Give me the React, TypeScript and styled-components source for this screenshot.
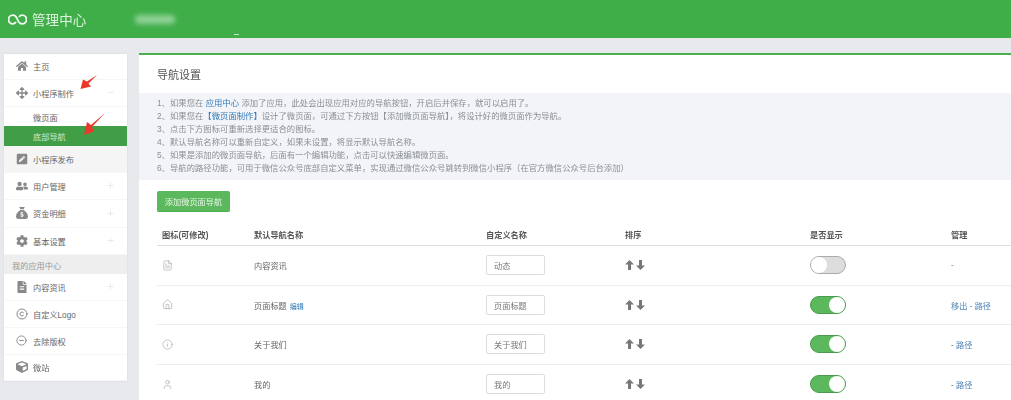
import React from 'react';
import styled, { createGlobalStyle } from 'styled-components';
import { FaHome, FaArrowsAlt, FaPenSquare, FaUserFriends, FaCog, FaFileAlt, FaCube } from 'react-icons/fa';
import { FaSackDollar } from 'react-icons/fa6';
import { Copyright, CircleMinus, FileText, House, Info, User, Plus, Minus } from 'lucide-react';

const GlobalStyle = createGlobalStyle`
    html, body {
        margin: 0;
        height: 400px;
        overflow: hidden;
        background: #e7e9ec;
        font-family: "Liberation Sans", "Noto Sans CJK SC", sans-serif;
        color: #666;
    }
`;

const Page = styled.div`
    position: relative;
    height: 400px;
    overflow: hidden;
    filter: blur(0.3px);
`;

const Header = styled.header`
    position: relative;
    height: 38px;
    background: #3fae49;
    display: flex;
    align-items: center;
    padding-left: 8px;
    color: #dcf1de;
`;

const BrandName = styled.span`
    font-size: 13.5px;
    margin-left: 5px;
    letter-spacing: 0.1px;
`;

const BlurredName = styled.div`
    width: 40px;
    height: 9px;
    margin-left: 49px;
    background: #8fd196;
    border-radius: 4px;
    filter: blur(2.5px);
`;

const HeaderSpeck = styled.div`
    position: absolute;
    left: 234px;
    top: 34px;
    width: 5px;
    height: 1px;
    background: #bfe6c3;
`;

const Body = styled.div`
    display: flex;
    align-items: flex-start;
    gap: 12px;
    padding: 15px 0 0 4px;
`;

const Sidebar = styled.nav`
    width: 123px;
    margin-top: 1px;
    background: #fff;
    box-shadow: 0 0 2px rgba(0, 0, 0, 0.08);
    flex-shrink: 0;
`;

const MenuRow = styled.div<{ $h?: number; $shade?: boolean }>`
    height: ${(p) => p.$h ?? 27}px;
    display: flex;
    align-items: center;
    padding: 0 12px 1px;
    font-size: 8.2px;
    color: #666;
    background: ${(p) => (p.$shade ? '#f5f5f5' : '#fff')};
    border-bottom: 1px solid #f6f6f6;
    box-sizing: border-box;
`;

const MenuIcon = styled.span`
    width: 17px;
    display: flex;
    justify-content: flex-start;
    color: #888;
    font-size: 12px;
`;

const MenuLabel = styled.span`
    flex: 1;
`;

const MenuMark = styled.span`
    color: #ccc;
    display: flex;
`;

const SubRow = styled.div<{ $active?: boolean }>`
    height: ${(p) => (p.$active ? 20 : 19)}px;
    display: flex;
    align-items: center;
    padding-left: 29px;
    font-size: 8.2px;
    color: ${(p) => (p.$active ? '#cfe8d0' : '#666')};
    background: ${(p) => (p.$active ? '#429e46' : '#fff')};
`;

const SectionLabel = styled.div`
    height: 19px;
    display: flex;
    align-items: center;
    padding-left: 8px;
    font-size: 8.2px;
    color: #999;
    background: #eee;
`;

const Main = styled.main`
    flex: 1;
    height: 345px;
    background: #fff;
    border-top: 2px solid #4caf50;
`;

const PanelTitle = styled.div`
    height: 38px;
    display: flex;
    align-items: center;
    padding: 0 0 1px 18px;
    box-sizing: border-box;
    font-size: 11px;
    color: #555;
`;

const Notes = styled.div`
    height: 87px;
    box-sizing: border-box;
    padding: 4px 0 0 18px;
    background: #f2f4f7;
    font-size: 8.35px;
    line-height: 13.1px;
    color: #8a8f96;
`;

const NoteLink = styled.span`
    color: #337ab7;
`;

const AddButton = styled.div`
    width: 73px;
    height: 21px;
    margin: 11px 0 0 18px;
    display: flex;
    align-items: center;
    justify-content: center;
    background: #5cb85c;
    border-radius: 2px;
    border-bottom: 1px solid #4cae4c;
    box-sizing: border-box;
    color: #e8f6e8;
    font-size: 8.2px;
`;

const Table = styled.div`
    margin: 11px 0 0 18px;
`;

const gridColumns = '92px 232px 139px 185px 141px 1fr';

const HeadRow = styled.div`
    display: grid;
    grid-template-columns: ${gridColumns};
    align-items: center;
    height: 22px;
    padding-left: 5px;
    border-bottom: 1px solid #ddd;
    font-size: 8.2px;
    font-weight: bold;
    color: #555;
`;

const BodyRow = styled.div`
    display: grid;
    grid-template-columns: ${gridColumns};
    align-items: center;
    height: 39.6px;
    box-sizing: border-box;
    padding-left: 5px;
    border-bottom: 1px solid #eee;
    font-size: 8.2px;
    color: #666;
`;

const RowIcon = styled.span`
    display: flex;
    color: #999;
`;

const EditLink = styled.span`
    color: #337ab7;
    font-size: 7px;
    margin-left: 3px;
`;

const NameInput = styled.div`
    width: 59px;
    height: 20px;
    box-sizing: border-box;
    display: flex;
    align-items: center;
    padding-left: 7px;
    border: 1px solid #ddd;
    border-radius: 2px;
    box-shadow: 0 0 1px rgba(0, 0, 0, 0.08);
    color: #777;
`;

const Arrows = styled.span`
    display: flex;
    gap: 2px;
    color: #777;
`;

const Toggle = styled.span<{ $on: boolean }>`
    display: flex;
    justify-content: ${(p) => (p.$on ? 'flex-end' : 'flex-start')};
    width: 36px;
    height: 18px;
    box-sizing: border-box;
    border-radius: 9px;
    border: 1px solid ${(p) => (p.$on ? '#4a9a4d' : '#aaa')};
    background: ${(p) => (p.$on ? '#5cb85c' : '#ddd')};
`;

const Knob = styled.span`
    width: 16px;
    height: 16px;
    border-radius: 50%;
    background: #fff;
`;

const ManageLinks = styled.span<{ $plain?: boolean }>`
    color: ${(p) => (p.$plain ? '#888' : '#4f86b8')};
`;

const RedArrow = styled.svg`
    position: absolute;
    left: 0;
    top: 0;
    pointer-events: none;
`;

const LinkLogo = () => (
    <svg width="19" height="11" viewBox="0 0 19 11" fill="none" stroke="#eef8ef" strokeWidth="1.9">
        <path d="M8 8 C7.2 9.2 6.2 9.9 4.9 9.9 A4.4 4.4 0 0 1 4.9 1.1 C7.4 1.1 8.5 3 9.5 5.5 C10.5 8 11.6 9.9 14.1 9.9 A4.4 4.4 0 0 0 14.1 1.1 C12.8 1.1 11.8 1.8 11 3" />
    </svg>
);

const SortArrow = ({ down }: { down?: boolean }) => (
    <svg width="9" height="10" viewBox="0 0 9 10" fill="currentColor">
        <polygon
            points="4.5,0 9,4.6 6,4.6 6,10 3,10 3,4.6 0,4.6"
            transform={down ? 'rotate(180 4.5 5)' : undefined}
        />
    </svg>
);

const plus = <MenuMark><Plus size={9} strokeWidth={1} /></MenuMark>;

const rows = [
    { icon: <FileText size={11} strokeWidth={1.2} />, name: '内容资讯', custom: '动态', on: false, manage: '-', plain: true },
    { icon: <House size={11} strokeWidth={1.2} />, name: '页面标题', edit: true, custom: '页面标题', on: true, manage: '移出 - 路径' },
    { icon: <Info size={11} strokeWidth={1.2} />, name: '关于我们', custom: '关于我们', on: true, manage: '- 路径' },
    { icon: <User size={11} strokeWidth={1.2} />, name: '我的', custom: '我的', on: true, manage: '- 路径' },
];

export default function App() {
    return (
        <Page>
            <GlobalStyle />
            <Header>
                <LinkLogo />
                <BrandName>管理中心</BrandName>
                <BlurredName />
                <HeaderSpeck />
            </Header>
            <Body>
                <Sidebar>
                    <MenuRow $h={26}><MenuIcon><FaHome /></MenuIcon><MenuLabel>主页</MenuLabel></MenuRow>
                    <MenuRow>
                        <MenuIcon><FaArrowsAlt /></MenuIcon>
                        <MenuLabel>小程序制作</MenuLabel>
                        <MenuMark><Minus size={9} strokeWidth={1} /></MenuMark>
                    </MenuRow>
                    <SubRow>微页面</SubRow>
                    <SubRow $active>底部导航</SubRow>
                    <MenuRow $shade><MenuIcon><FaPenSquare /></MenuIcon><MenuLabel>小程序发布</MenuLabel></MenuRow>
                    <MenuRow><MenuIcon><FaUserFriends /></MenuIcon><MenuLabel>用户管理</MenuLabel>{plus}</MenuRow>
                    <MenuRow $h={28}><MenuIcon><FaSackDollar /></MenuIcon><MenuLabel>资金明细</MenuLabel>{plus}</MenuRow>
                    <MenuRow><MenuIcon><FaCog /></MenuIcon><MenuLabel>基本设置</MenuLabel>{plus}</MenuRow>
                    <SectionLabel>我的应用中心</SectionLabel>
                    <MenuRow><MenuIcon><FaFileAlt /></MenuIcon><MenuLabel>内容资讯</MenuLabel>{plus}</MenuRow>
                    <MenuRow><MenuIcon><Copyright size={12} /></MenuIcon><MenuLabel>自定义Logo</MenuLabel></MenuRow>
                    <MenuRow><MenuIcon><CircleMinus size={11} /></MenuIcon><MenuLabel>去除版权</MenuLabel></MenuRow>
                    <MenuRow $h={26}><MenuIcon><FaCube /></MenuIcon><MenuLabel>微站</MenuLabel></MenuRow>
                </Sidebar>
                <Main>
                    <PanelTitle>导航设置</PanelTitle>
                    <Notes>
                        <div>1、如果您在 <NoteLink>应用中心</NoteLink> 添加了应用，此处会出现应用对应的导航按钮，开启后并保存，就可以启用了。</div>
                        <div>2、如果您在<NoteLink>【微页面制作】</NoteLink>设计了微页面，可通过下方按钮【添加微页面导航】，将设计好的微页面作为导航。</div>
                        <div>3、点击下方图标可重新选择更适合的图标。</div>
                        <div>4、默认导航名称可以重新自定义，如果未设置，将显示默认导航名称。</div>
                        <div>5、如果是添加的微页面导航，后面有一个编辑功能，点击可以快速编辑微页面。</div>
                        <div>6、导航的路径功能，可用于微信公众号底部自定义菜单，实现通过微信公众号跳转到微信小程序（在官方微信公众号后台添加）</div>
                    </Notes>
                    <AddButton>添加微页面导航</AddButton>
                    <Table>
                        <HeadRow>
                            <span>图标(可修改)</span>
                            <span>默认导航名称</span>
                            <span>自定义名称</span>
                            <span>排序</span>
                            <span>是否显示</span>
                            <span>管理</span>
                        </HeadRow>
                        {rows.map((row) => (
                            <BodyRow key={row.name}>
                                <RowIcon>{row.icon}</RowIcon>
                                <span>{row.name}{row.edit && <EditLink>编辑</EditLink>}</span>
                                <NameInput>{row.custom}</NameInput>
                                <Arrows><SortArrow /><SortArrow down /></Arrows>
                                <Toggle $on={row.on}><Knob /></Toggle>
                                <ManageLinks $plain={row.plain}>{row.manage}</ManageLinks>
                            </BodyRow>
                        ))}
                    </Table>
                </Main>
            </Body>
            <RedArrow width="1011" height="400">
                <polygon points="97,75 87,81.5 83,79.5 80.5,89 91,86.5 88.5,83.5" fill="#e8392b" />
                <polygon points="105,113 91,125 87,122 84,135 94,131.5 92,127" fill="#e8392b" />
            </RedArrow>
        </Page>
    );
}
